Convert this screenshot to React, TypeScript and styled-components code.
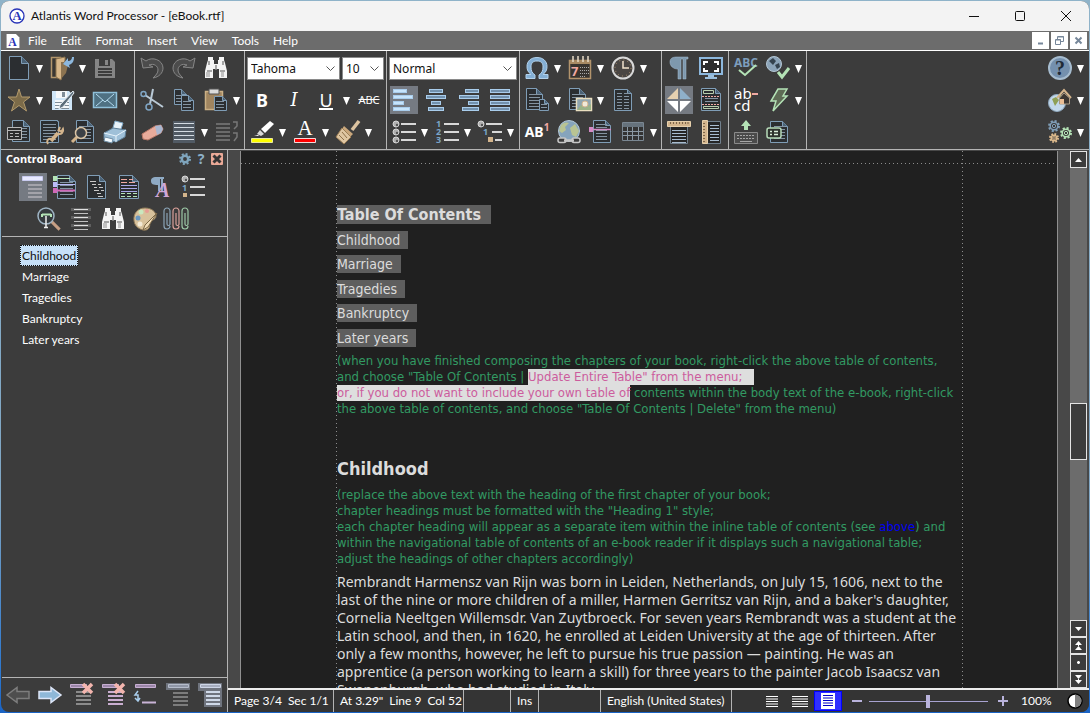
import React, { ReactNode } from 'react';
import styled, { createGlobalStyle, css } from 'styled-components';

const uiFont = 'Lato, "Noto Sans", sans-serif';
const noto = '"Noto Sans", "Open Sans", sans-serif';
const dejavu = '"DejaVu Sans Condensed", "DejaVu Sans", sans-serif';

const c = {
  panel: '#3c3c3c',
  bar: '#6c6c6c',
  edge: '#b4b4b4',
  sheet: '#202020',
  gutter: '#484848',
  steel: '#7f9db6',
  sky: '#a9cdec',
  sand: '#d3b48c',
  dark: '#2b2e31',
  mint: '#b4e3b6',
  lilac: '#b9b3dc',
  rose: '#f0a9a2',
};

const GlobalStyle = createGlobalStyle`
  * { box-sizing: border-box; }
  html, body { margin: 0; padding: 0; overflow: hidden; }
  body { font: 12px/16px ${uiFont}; color: #fff; }
  button { margin: 0; padding: 0; border: 0; background: none; color: inherit; font: inherit; cursor: default; }
  ul, h1, h2, p { margin: 0; padding: 0; }
  ul { list-style: none; }
`;

/* ---------- window frame ---------- */

const Desktop = styled.div`
  height: 100vh;
  padding: 1px;
  background: linear-gradient(#8fb3c9 0%, #7fa6c4 70%, #2a76cf 95%, #1a63c4 100%);
`;

const WindowFrame = styled.main`
  display: flex;
  flex-direction: column;
  height: 100%;
  border-radius: 8px;
  overflow: hidden;
  background: ${c.panel};
`;

const TitleBar = styled.header`
  display: flex;
  align-items: center;
  flex: none;
  height: 30px;
  padding-left: 8px;
  gap: 6px;
  background: #f3f3f3;
  color: #101010;
`;

const TitleText = styled.span`
  flex: 1;
`;

const CaptionButtons = styled.div`
  display: flex;
`;

const CaptionButton = styled.button`
  display: grid;
  place-items: center;
  width: 46px;
  height: 30px;
`;

const MenuBar = styled.nav`
  display: flex;
  align-items: center;
  flex: none;
  height: 20px;
  padding: 0 2px 0 5px;
  border-bottom: 1px solid #fff;
  background: ${c.bar};
`;

const Menus = styled.div`
  display: flex;
  flex: 1;
  gap: 14px;
  padding-left: 8px;
`;

const MenuButton = styled.button`
  height: 18px;
`;

const ChildButtons = styled.div`
  display: flex;
  gap: 2px;
`;

const ChildButton = styled.button`
  display: grid;
  place-items: center;
  width: 17px;
  height: 17px;
  background: #fff;
`;

/* ---------- toolbar ---------- */

const Toolbar = styled.div`
  display: flex;
  flex: none;
  height: 99px;
  padding: 0 0 0 1px;
  border-bottom: 1px solid ${c.edge};
  background: ${c.panel};
`;

const ToolGroup = styled.div<{ $wide?: boolean }>`
  padding: 1px ${(p) => (p.$wide ? 2 : 1)}px 0 1px;
  border-right: 1px solid ${c.edge};
`;

const HelpGroup = styled.div`
  margin-left: auto;
  padding: 1px 2px 0 0;
`;

const ToolRow = styled.div`
  display: flex;
  height: 32px;
`;

const ComboRow = styled.div`
  display: flex;
  gap: 2px;
  height: 32px;
  padding: 4px 1px;
`;

const Slot = styled.button<{ $on?: boolean }>`
  display: grid;
  place-items: center;
  width: 28px;
  height: 28px;
  margin: 2px;
  ${(p) => p.$on && css`background: #757a82;`}
`;

const CaretSlot = styled.button`
  display: grid;
  place-items: center;
  width: 11px;
  height: 32px;
  padding: 2px 2px 0 0;
`;

const Art = styled.svg`
  display: block;
  overflow: visible;
`;

const SelectWrap = styled.label<{ $w: number }>`
  display: grid;
  align-items: center;
  width: ${(p) => p.$w}px;
  height: 24px;
  > * { grid-area: 1 / 1; }
  svg { justify-self: end; margin-right: 5px; pointer-events: none; }
`;

const Select = styled.select`
  appearance: none;
  width: 100%;
  height: 23px;
  padding: 0 3px;
  border: 1px solid #8a8a8a;
  border-radius: 0;
  background: #fff;
  color: #111;
  font: 12px ${noto};
`;

const Letter = styled.span<{ $kind: 'b' | 'i' | 'u' | 's' | 'n' }>`
  line-height: 24px;
  ${(p) => p.$kind === 'b' && css`font: bold 18px/24px ${noto};`}
  ${(p) => p.$kind === 'i' && css`font: italic 18px/24px "DejaVu Serif", "Liberation Serif", serif;`}
  ${(p) => p.$kind === 'u' && css`font: 18px/20px ${noto}; border-bottom: 2px solid #fff; height: 20px;`}
  ${(p) => p.$kind === 's' && css`font: 11px/24px ${noto}; text-decoration: line-through;`}
  ${(p) => p.$kind === 'n' && css`font: bold 14px/24px ${noto}; sup { font-size: 10px; line-height: 8px; color: ${c.rose}; }`}
`;

/* ---------- control board ---------- */

const Body = styled.div`
  display: flex;
  flex: 1;
  min-height: 0;
`;

const Board = styled.aside`
  display: flex;
  flex-direction: column;
  flex: none;
  width: 227px;
  padding-left: 1px;
  border-right: 1px solid ${c.edge};
`;

const BoardHeader = styled.div`
  display: flex;
  align-items: center;
  gap: 4px;
  height: 19px;
  padding: 0 4px 2px;
`;

const BoardTitle = styled.h2`
  flex: 1;
  font: bold 11px/16px ${noto};
`;

const BoardTools = styled.div`
  padding: 2px 0 1px;
  border-bottom: 1px solid ${c.edge};
`;

const BoardRow = styled.div<{ $indent: number }>`
  display: flex;
  height: 32px;
  padding-left: ${(p) => p.$indent}px;
`;

const Outline = styled.ul`
  flex: 1;
  padding: 8px 0 0 18px;
`;

const OutlineItem = styled.button<{ $on?: boolean }>`
  display: block;
  height: 21px;
  padding: 0 2px;
  ${(p) => p.$on && css`
    background: #c6e0f8;
    color: #111;
    outline: 1px dotted #111;
    outline-offset: -1px;
  `}
`;

const BoardFooter = styled.div`
  display: flex;
  height: 35px;
  padding-top: 1px;
  border-top: 1px solid ${c.edge};
`;

/* ---------- document ---------- */

const Workspace = styled.section`
  display: flex;
  flex-direction: column;
  flex: 1;
  min-width: 0;
`;

const Viewport = styled.div`
  display: flex;
  flex: 1;
  min-height: 0;
  padding: 1px 2px 0 12px;
  border-bottom: 2px solid #ececec;
  background: ${c.gutter};
`;

const dotsDown = 'repeating-linear-gradient(to bottom, #8c8c8c 0 1px, transparent 1px 4px)';
const dotsAcross = 'repeating-linear-gradient(to right, #8c8c8c 0 1px, transparent 1px 4px)';

const Sheet = styled.article`
  flex: 1;
  min-width: 0;
  margin-right: 12px;
  padding: 54px 94px 0 96px;
  overflow: hidden;
  border: solid #909090;
  border-width: 0 1px;
  background:
    ${dotsDown} left 95px top 0 / 1px 100% no-repeat,
    ${dotsDown} right 94px top 0 / 1px 100% no-repeat,
    ${dotsAcross} left 0 top 12px / 100% 1px no-repeat,
    ${c.sheet};
  color: #dcdcdc;
  white-space: nowrap;
`;

const ContentsTitle = styled.h1`
  width: max-content;
  padding-right: 10px;
  background: #5e5e5e;
  font: bold 16px/19px ${dejavu};
`;

const Contents = styled.ul`
  padding-bottom: 6px;
`;

const ContentsItem = styled.li`
  width: max-content;
  margin-top: 6px;
  padding-right: 8px;
  background: #5e5e5e;
  font: 14px/18px ${dejavu};
  &:nth-child(odd) { margin-top: 7px; }
`;

const Note = styled.p`
  color: #329a63;
  font: 13px/16px ${dejavu};
`;

const Marked = styled.span`
  display: inline-block;
  padding-right: 12px;
  background: #dedede;
  color: #cc5c9d;
  & + br + & { padding-right: 0; }
`;

const CrossLink = styled.a`
  color: #0000f0;
  text-decoration: none;
`;

const Chapter = styled.h2`
  padding: 40px 0 6px;
  font: bold 18px/24px ${dejavu};
`;

const Paragraph = styled.p`
  padding-top: 6px;
  font: 14px/18px ${noto};
`;

const ScrollBar = styled.div`
  display: flex;
  flex-direction: column;
  width: 17px;
  background: ${c.bar};
`;

const ScrollButton = styled.button`
  display: grid;
  place-items: center;
  flex: none;
  width: 17px;
  height: 17px;
  border: 1px solid #e4e4e4;
  background: ${c.panel};
`;

const Track = styled.div<{ $grow: number }>`
  flex: ${(p) => p.$grow} 0 0;
`;

const Thumb = styled.div`
  flex: none;
  height: 57px;
  border: 1px solid #e4e4e4;
  background: ${c.panel};
`;

/* ---------- status bar ---------- */

const StatusBar = styled.footer`
  display: flex;
  align-items: center;
  flex: none;
  height: 22px;
  background: #343434;
`;

const StatusCell = styled.div<{ $w: number }>`
  display: flex;
  align-items: center;
  gap: 6px;
  flex: none;
  width: ${(p) => p.$w}px;
  height: 22px;
  padding-left: 6px;
  border-right: 1px solid ${c.edge};
  white-space: nowrap;
`;

const ViewTools = styled.div`
  display: flex;
  align-items: center;
  flex: none;
  margin-left: auto;
`;

const ViewButton = styled.button<{ $on?: boolean }>`
  display: grid;
  place-items: center;
  width: 28px;
  height: 20px;
  ${(p) => p.$on && css`background: #2f2fff; border: 1px solid #0000ff;`}
`;

const ZoomStep = styled.button`
  display: grid;
  place-items: center;
  width: 12px;
  height: 20px;
  margin: 0 6px 0 9px;
`;

const ZoomSlider = styled.input`
  appearance: none;
  width: 119px;
  height: 20px;
  margin: 0;
  background: linear-gradient(#a8a2d0, #a8a2d0) center / 100% 1px no-repeat;
  &::-webkit-slider-thumb {
    appearance: none;
    width: 4px;
    height: 13px;
    background: ${c.lilac};
  }
`;

const ZoomValue = styled.output`
  width: 52px;
  padding-left: 6px;
`;

const ThemeButton = styled.button`
  width: 16px;
  height: 16px;
  margin-right: 6px;
`;

/* ---------- icons ---------- */

const page = (x: number, y: number, w: number, h: number, f = 6) => (
  <>
    <path
      d={`M${x + 0.5} ${y + 0.5}h${w - f - 1}l${f} ${f}v${h - f - 1}h${1 - w}z`}
      fill={c.dark}
      stroke={c.steel}
    />
    <path d={`M${x + w - f - 0.5} ${y + 0.5}v${f}h${f}`} fill="#4b6276" stroke={c.steel} />
  </>
);

const lines = (x: number, y: number, w: number, n: number, step = 3, color = '#8494a2', t = 1) => (
  <path
    d={Array.from({ length: n }, (_, i) => `M${x} ${y + i * step + t / 2}h${w}`).join('')}
    stroke={color}
    strokeWidth={t}
    fill="none"
  />
);

const binoculars = (
  <g fill="#f4f4f4">
    <path d="M4 1h5v3h1v4h4V4h1V1h5v3l1 3 2 8v7h-8v-9h-6v9H1v-7l2-8 1-3z" />
    <path d="M5 5v4M19 5v4M3 15h5M16 15h5M12 9v5" stroke="#8b8b8b" strokeWidth="1.5" />
    <path d="M2 16h4v5H2zM17 16h3v5h-3z" fill="#c2c2c2" />
  </g>
);

const gear = (x: number, y: number, r: number, color: string, id: string) => (
  <g key={id} fill="none" stroke={color}>
    <circle cx={x} cy={y} r={r} strokeWidth="2" strokeDasharray={`${r * 0.42} ${r * 0.365}`} />
    <circle cx={x} cy={y} r={r - 1.2} strokeWidth="1.5" />
    <circle cx={x} cy={y} r={r / 3} strokeWidth="1" />
  </g>
);

const floppy = (body: string, ink: string, slot: string) => (
  <>
    <path d="M2 3h17l3 3v16H2z" fill={body} />
    <path d="M6 3h11v7H6z" fill={ink} />
    <path d="M12 4h3v5h-3z" fill={slot} />
    <path d="M5 12h14v9H5z" fill={ink} />
    {lines(5, 14, 14, 3, 3, slot)}
  </>
);

const ball = (x: number, y: number) => (
  <>
    <circle cx={x} cy={y} r="3" fill="#b0b0b0" stroke="#d8d8d8" strokeWidth="1" />
    <circle cx={x + 1} cy={y + 1} r="1.2" fill="#555" />
  </>
);

const bar = (x: number, y: number, w: number, fill: string) => (
  <rect key={`${x}-${y}`} x={x + 0.5} y={y + 0.5} width={w - 1} height="3" fill={fill} stroke={c.sky} />
);

const bars = (rows: [number, number][], fill: string) => <>{rows.map(([x, w], i) => bar(x, 1 + i * 6, w, fill))}</>;

const arrow = (fill: string, stroke: string) => (
  <path d="M1 8.500h12v-4L23 12l-10 7.500v-4H1z" fill={fill} stroke={stroke} strokeWidth="1.5" />
);

const magnifier = (x: number, y: number, r: number, handle: string) => (
  <>
    <path d={`M${x + r * 0.7} ${y + r * 0.7}l${r} ${r}`} stroke={handle} strokeWidth="3" />
    <circle cx={x} cy={y} r={r} fill="#353a3e" stroke="#9fb4c4" strokeWidth="1.5" />
  </>
);

const cross = (
  <path d="M13 1l9 9M22 1l-9 9" stroke="#f3b5ae" strokeWidth="3.500" />
);

const icons: Record<string, ReactNode> = {
  app: (
    <>
      <circle cx="12" cy="12" r="10.500" fill="#fff" stroke="#2a35b8" strokeWidth="2" />
      <text x="12" y="18" textAnchor="middle" fontFamily="Liberation Serif" fontWeight="bold" fontSize="19" fill="#2a35b8">A</text>
    </>
  ),
  appDoc: (
    <>
      <path d="M1 0h16l6 6v18H1z" fill="#fff" />
      <text x="11" y="21" textAnchor="middle" fontFamily="Liberation Serif" fontWeight="bold" fontSize="20" fill="#2a35b8">A</text>
    </>
  ),
  new: page(2, 0, 20, 24, 7),
  open: (
    <>
      <path d="M1.500 1.500h9v20h-9z" fill="#3a3733" stroke="#b3966c" strokeWidth="1.500" />
      <path d="M6 3l9-2v3l-4 20-5-3z" fill="#d9b88a" stroke="#8d744f" />
      <path d="M11 6h6l1 3-2 8-5 6z" fill="#8c7350" />
      <path d="M24 1c0 5-2 7-5 8l1 3-7-4 5-6v3c3 0 4-2 4-4z" fill="#8db8de" />
    </>
  ),
  save: floppy('#858585', '#3c3c3c', '#858585'),
  star: <path d="M12 1l2.500 8H23l-6.500 5 3 9L12 17.500 4.500 23l3-9L1 9h8.500z" fill="#7c6b49" stroke="#b39a6c" />,
  saveAs: (
    <>
      {floppy('#cfe6f8', '#f5f8fa', '#7f8d98')}
      <path d="M23 3L10 17l-1 4 4-2L24 5z" fill="#5c6d7a" stroke="#e6eef4" />
    </>
  ),
  mail: (
    <>
      <path d="M.5 4.500h23v15H.5z" fill="#4f7183" stroke="#8fc0da" strokeWidth="1.500" />
      <path d="M3 6l9 8 9-8M3 18l7-6M21 18l-7-6" fill="none" stroke="#b4daee" />
    </>
  ),
  template: (
    <>
      {page(5, 0, 18, 22)}
      {lines(12, 8, 8, 4)}
      <path d="M.5 7.500h14v12H.5z" fill="#2d2d2d" stroke="#b8b8b8" />
      <path d="M.5 10.500h14M3 13.500h3M8 13.500h4M3 16.500h3M8 16.500h4" stroke="#b8b8b8" />
    </>
  ),
  docSetup: (
    <>
      {page(1, 0, 19, 23, 1)}
      {lines(4, 4, 13, 6)}
      <path d="M12 21l7-8" stroke={c.sand} strokeWidth="3.500" />
      <path d="M21 7l-1.500 3.500 3 1L24 9c1 3-2 6-5 4.500M12 19c-3-1-5 2-3 5" fill="none" stroke={c.sand} strokeWidth="2" />
    </>
  ),
  preview: (
    <>
      {page(5, 0, 18, 23)}
      {lines(8, 6, 12, 5)}
      <path d="M6 17l-5 5" stroke={c.sand} strokeWidth="3" />
      <circle cx="10" cy="13" r="5.500" fill="#3c4146" stroke="#d9c3a4" strokeWidth="1.500" />
    </>
  ),
  print: (
    <>
      <path d="M9 11l3-10 8 2-3 9z" fill="#e9f3fa" stroke="#7fa8c6" />
      <path d="M1 13l9-5 13 2-1 7-9 5-12-3z" fill="#9fc0d8" stroke="#5c7d96" />
      <path d="M1 13l12 3 10-6M13 16v6" stroke="#e8f4fc" fill="none" />
      <path d="M2 17l8 2-1 4-8-2z" fill="#f4fafe" stroke="#6e8ea6" />
    </>
  ),
  undo: <path d="M1 2l2 10 10-1-4-2c5-2 9 1 9 5 0 3-2 5-5 8 6-1 10-5 10-10C23 4 12 0 6 5z" fill="#4c4c4c" stroke="#868686" />,
  redo: <path d="M23 2l-2 10-10-1 4-2c-5-2-9 1-9 5 0 3 2 5 5 8-6-1-10-5-10-10C1 4 12 0 18 5z" fill="#4c4c4c" stroke="#868686" />,
  find: binoculars,
  cut: (
    <>
      <path d="M13 1l-3 15M5 7l18 12" stroke="#b9c9d6" strokeWidth="2" />
      <circle cx="3.500" cy="6" r="2.500" fill="none" stroke="#7fa5c4" strokeWidth="1.500" />
      <circle cx="9" cy="19" r="3" fill="none" stroke="#7fa5c4" strokeWidth="1.500" />
    </>
  ),
  copy: (
    <>
      {page(2, 1, 13, 16, 5)}
      {lines(4, 7, 7, 3)}
      {page(9, 7, 13, 16, 5)}
      {lines(11, 13, 8, 3)}
    </>
  ),
  paste: (
    <>
      <path d="M1.500 3.500h17v18h-17z" fill="#a08560" stroke="#cbb085" strokeWidth="1.500" />
      <path d="M5 1h10v5H5z" fill="#dcdcdc" stroke="#555" />
      {page(10, 8, 13, 15, 4)}
      {lines(12, 13, 8, 3)}
    </>
  ),
  eraser: (
    <>
      <path d="M2 14l13-8 6-1 2 4-2 4-13 7-5-1z" fill="#e8ab9b" stroke="#b97868" />
      <path d="M15 6l6-1 2 4-2 4-4 2z" fill="#a9b7d0" />
    </>
  ),
  linesList: (
    <>
      <path d="M1 1h22v22H1z" fill="#515a64" />
      {lines(2, 3, 20, 5, 4, '#d4dbe2', 1)}
    </>
  ),
  sorted: (
    <>
      {lines(1, 3, 14, 5, 4, '#6b6b6b', 2)}
      <path d="M18 2h4v4l-3 3M18 13h4v4l-3 4" fill="none" stroke="#777" strokeWidth="1.500" />
    </>
  ),
  highlight: (
    <>
      <path d="M20 1l4 3-9 9-4-4z" fill="#fff" />
      <path d="M10 10l4 4-3 2-4-2z" fill="#d8d8d8" />
      <path d="M4 16l4-1 1 1z" fill="#fff" />
      <path d="M1.500 18.500h21v4h-21z" fill="#ff0" stroke="#e8e8a0" />
    </>
  ),
  fontColor: (
    <>
      <text x="12" y="15" textAnchor="middle" fontFamily="Liberation Serif" fontSize="21" fill="#fff">A</text>
      <path d="M1.500 18.500h21v4h-21z" fill="#f00" stroke="#f4dada" />
    </>
  ),
  brush: (
    <>
      <path d="M23 1l-7 9" stroke="#dcc3a0" strokeWidth="3.500" />
      <path d="M8 6l9 8-3 3-8-8z" fill="#c9a77c" />
      <path d="M6 8l9 9-7 7-8-7z" fill="#dfc6a2" stroke="#9d7f56" />
      <path d="M3 15l5 5M6 12l5 6" stroke="#8e7149" />
    </>
  ),
  left: bars([[1, 14], [1, 20], [1, 11], [1, 17]], '#c7e4fb'),
  center: bars([[5, 14], [2, 20], [7, 10], [4, 16]], '#7291ad'),
  right: bars([[9, 14], [3, 20], [12, 11], [6, 17]], '#7291ad'),
  justify: bars([[2, 20], [2, 20], [2, 20], [2, 20]], '#7291ad'),
  bullets: (
    <>
      {ball(4, 4)}
      {ball(4, 12)}
      {ball(4, 20)}
      {lines(9, 3, 15, 3, 8, '#d8d8d8', 2)}
    </>
  ),
  numbers: (
    <>
      <g fontFamily="Noto Sans" fontWeight="bold" fontSize="9" fill="#7aa4c8">
        <text x="1" y="7">1</text>
        <text x="1" y="15">2</text>
        <text x="1" y="23">3</text>
      </g>
      {lines(9, 3, 15, 3, 8, '#d8d8d8', 2)}
    </>
  ),
  levels: (
    <>
      {ball(3, 4)}
      <text x="5" y="15" fontFamily="Noto Sans" fontWeight="bold" fontSize="9" fill="#7aa4c8">1</text>
      <path d="M10 17h5v5h-5z" fill={c.sand} />
      <path d="M8 4h16M14 12h10M17 20h7" stroke="#d8d8d8" strokeWidth="2" />
    </>
  ),
  omega: (
    <path
      d="M1 22.500v-4h5C3 16 2 14 2 10.500 2 5 6 1.500 12 1.500s10 3.500 10 9c0 3.500-1 5.500-4 8h5v4h-9V19c3-2 4-4.500 4-8 0-4-2-6-6-6s-6 2-6 6c0 3.500 1 6 4 8v3.500z"
      fill="#84afd4"
      stroke="#b3d2ec"
    />
  ),
  calendar: (
    <>
      <path d="M1.500 4.500h21v18h-21z" fill="#38342f" stroke="#b3946c" strokeWidth="1.500" />
      <path d="M2 4h20v4H2z" fill="#a88a63" />
      <path d="M5 0v6M10 0v6M15 0v6M20 0v6" stroke="#e8dcc8" strokeWidth="1.500" />
      <text x="3" y="20" fontFamily="Noto Sans" fontWeight="bold" fontSize="13" fill={c.rose}>7</text>
      <path d="M12 11.500h9M12 14.500h9M12 17.500h9M12 20.500h6" stroke="#aaa" strokeDasharray="1 1" />
    </>
  ),
  clock: (
    <>
      <circle cx="12" cy="12" r="10.500" fill="#4a4643" stroke="#d8d8d8" strokeWidth="2" />
      <circle cx="12" cy="12" r="8" fill="none" stroke="#b49572" strokeDasharray="1 3.200" />
      <path d="M12 5v7h6" fill="none" stroke="#f2e2cc" strokeWidth="1.500" />
    </>
  ),
  docs: (
    <>
      {page(1, 0, 17, 22, 6)}
      {lines(4, 6, 11, 5)}
      {page(14, 11, 10, 12, 4)}
      {lines(16, 16, 6, 2)}
    </>
  ),
  picture: (
    <>
      {page(1, 0, 17, 22, 6)}
      {lines(4, 6, 11, 5)}
      <path d="M8.500 10.500h15v12h-15z" fill="#8fa5b0" stroke="#eadfc0" strokeWidth="1.500" />
      <path d="M9 22l4-5 4 3 6-4v6z" fill="#9ab387" />
      <circle cx="17" cy="16" r="3" fill="#f1ead8" stroke={c.sand} />
    </>
  ),
  columns: (
    <>
      {page(3, 1, 18, 22, 4)}
      {lines(6, 5, 5, 6)}
      {lines(13, 5, 5, 6)}
    </>
  ),
  link: (
    <>
      <circle cx="12" cy="11" r="10.500" fill="#86a4bc" stroke="#b4c9d8" />
      <path d="M4 5c3-3 6-3 8-2l-4 4 1 3-4 3-3-2zM13 8l5-4 4 7-3 6-4-2z" fill="#b9c493" />
      <g fill="#3c3c3c" stroke="#c7c7c7" strokeWidth="1.500">
        <rect x="1" y="18" width="8" height="4.500" rx="2" />
        <rect x="15" y="18" width="8" height="4.500" rx="2" />
        <path d="M7 20.500h10" strokeWidth="2.500" />
      </g>
    </>
  ),
  footnote: (
    <>
      {page(4, 0, 18, 23, 5)}
      {lines(7, 4, 11, 6)}
      <path d="M0 9.500h22" stroke="#d48ac6" strokeWidth="1.500" />
      <path d="M0 7h4v5H0z" fill="#d48ac6" />
    </>
  ),
  table: (
    <>
      <path d="M1.500 2.500h21v18h-21z" fill="#333" stroke="#7a8792" />
      <path d="M2 3h20v4H2z" fill="#66727c" />
      <path d="M6.500 7v13M11.500 7v13M17.500 7v13M2 11.500h20M2 15.500h20" stroke="#8b98a3" />
    </>
  ),
  pilcrow: <path d="M3 6c0-4 3-5 7-5h11v2h-2v20h-3V3h-2v20h-3V13C6 13 3 10 3 6z" fill="#7e98ad" stroke="#a9c1d6" strokeWidth=".5" />,
  screen: (
    <>
      <path d="M1 2h22v16H1z" fill="#2f2f2f" stroke="#8db8de" strokeWidth="2" />
      <path d="M5 9V6h4M15 6h4v3M19 12v3h-4M9 15H5v-3" fill="none" stroke="#fff" strokeWidth="2" />
      <path d="M9 19h6v2h3v2H6v-2h3z" fill="#9cc0de" />
    </>
  ),
  compass: (
    <>
      <path d="M11 0v11H0z" fill="#e6d0b0" />
      <path d="M13 0v11h11z" fill="#8fb0ca" />
      <path d="M0 13h11v11zM24 13H13v11z" fill="#fff" />
    </>
  ),
  headers: (
    <>
      {page(2, 0, 20, 23, 5)}
      <path d="M4.500 2.500h10v3h-10zM4.500 18.500h15v2h-15z" fill="none" stroke="#b9cfae" />
      <path d="M3 8.500h18M3 16.500h18" stroke={c.rose} strokeDasharray="2 1" />
      {lines(6, 10, 13, 2, 3)}
    </>
  ),
  rulerTop: (
    <>
      <path d="M3.500 4.500h17v19h-17z" fill="#262626" stroke="#71808d" />
      {lines(5, 10, 14, 5, 3, '#a9bdd0')}
      <path d="M.5 1.500h23v5H.5z" fill={c.sand} stroke="#e7d0ac" />
      <path d="M3.500 2v2M6.500 2v2M9.500 2v2M12.500 2v2M15.500 2v2M18.500 2v2M21 2v2" stroke="#7d664a" />
    </>
  ),
  rulerSide: (
    <>
      <path d="M5.500 1.500h16v22h-16z" fill="#262626" stroke="#71808d" />
      {lines(11, 5, 9, 6, 3, '#a9bdd0')}
      <path d="M3.500.5h5v23h-5z" fill={c.sand} stroke="#e7d0ac" />
      <path d="M4 3.500h2M4 6.500h2M4 9.500h2M4 12.500h2M4 15.500h2M4 18.500h2M4 21.500h2" stroke="#7d664a" />
    </>
  ),
  spell: (
    <>
      <text x="12" y="11" textAnchor="middle" fontFamily="Noto Sans" fontWeight="bold" fontSize="12" fill="#7d9dbd">ABC</text>
      <path d="M5 14l6 5L22 9" fill="none" stroke={c.mint} strokeWidth="2" />
    </>
  ),
  lookup: (
    <>
      <circle cx="8" cy="8" r="7.500" fill="#8ba3b8" stroke="#b3c6d4" />
      <path d="M3 5l4-3 3 3-3 4zM9 9l4-2 1 4-3 2z" fill="#34424e" />
      <path d="M12 16l4 5 7-9" fill="none" stroke={c.mint} strokeWidth="3" />
    </>
  ),
  hyphen: (
    <g fontFamily="Noto Sans" fontSize="15" fill="#fff">
      <text x="0" y="11">ab</text>
      <text x="0" y="23">cd</text>
      <path d="M18 6h6" stroke={c.rose} strokeWidth="2" />
    </g>
  ),
  bolt: <path d="M12 1h9l-4 7h4L7 23l3-10H5z" fill="#5e6b55" stroke={c.mint} strokeWidth="1.500" />,
  keyboard: (
    <>
      <path d="M12 0l5 6h-3v4h-4V6H7z" fill={c.mint} />
      <path d="M.5 12.500h23v11H.5z" fill="#4b4b4b" stroke="#8a8a8a" />
      <path d="M3 15.500h18M3 18.500h18" stroke="#a6a6a6" strokeDasharray="2 1" />
      <path d="M6 21.500h12" stroke="#a6a6a6" />
    </>
  ),
  comment: (
    <>
      {page(4, 1, 18, 22, 5)}
      {lines(8, 6, 11, 5)}
      <rect x="1" y="8" width="14" height="10" rx="2" fill="#2e332e" stroke="#b7dbb9" strokeWidth="1.500" />
      <path d="M4 11.500h2M8 11.500h4M4 14.500h2M8 14.500h4" stroke="#dcefdc" strokeWidth="1.500" />
    </>
  ),
  help: (
    <>
      <circle cx="12" cy="12" r="11" fill="#7490ae" stroke="#a6bccf" strokeWidth="2" />
      <text x="12" y="19" textAnchor="middle" fontFamily="Liberation Serif" fontWeight="bold" fontSize="20" fill="#1f2a36">?</text>
    </>
  ),
  home: (
    <>
      <circle cx="9" cy="15" r="8.500" fill="#c3d8ea" stroke="#8fa9bf" />
      <path d="M4 11l4-2 3 3-4 6zM10 8l3-1v4z" fill="#8fa055" />
      <path d="M9 10l7-8 7 8" fill="none" stroke={c.sand} strokeWidth="2" />
      <path d="M11.500 10l4.500-5 5.500 5v6h-10z" fill="#3b3632" stroke="#a99a84" />
      <path d="M12 11h4v5h-4z" fill="#e9bd94" />
    </>
  ),
  gears: <>{[gear(6, 6, 5, '#7f9db6', 'a'), gear(18, 13, 5, '#b4e3b6', 'b'), gear(6, 18, 4, '#dcb98c', 'c')]}</>,
  headings: (
    <>
      <path d="M1.500 1.500h20v4h-20z" fill="#e8e9ff" stroke="#c9cbf0" />
      {lines(7, 9, 14, 4, 4, '#a3a3aa', 2)}
    </>
  ),
  bookmarks: (
    <>
      {page(4, 0, 19, 24, 6)}
      {lines(7, 7, 13, 5)}
      <path d="M0 1h4v5H0z" fill={c.mint} />
      <path d="M0 7h4v5H0z" fill="#bcbcf8" />
      <path d="M0 13h4v5H0z" fill="#d069b8" />
      <path d="M4 3.500h13" stroke={c.mint} />
      <path d="M4 9.500h18" stroke="#bcbcf8" />
      <path d="M4 15.500h18" stroke="#d069b8" strokeWidth="2" />
    </>
  ),
  fields: (
    <>
      {page(2, 0, 19, 24, 6)}
      <path d="M5 6.500h6M7 9.500h4M9 12.500h3M9 15.500h5M13 9.500h3M14 12.500h4M12 18.500h4M16 15.500h3M13 21.500h5" stroke="#c8c8c8" />
    </>
  ),
  sections: (
    <>
      {page(2, 0, 20, 24, 6)}
      <path d="M4 4.500h12M4 7.500h14" stroke={c.rose} strokeDasharray="6 2" />
      {lines(4, 10, 16, 3, 3, '#a9a9e8')}
      <path d="M4 18.500h16M4 21.500h16" stroke={c.mint} strokeDasharray="4 2" />
    </>
  ),
  styles: (
    <>
      <path d="M2 6c0-3 2-4 5-4h8v2h-1v12h-2V4h-1v12H9v-6C4 10 2 9 2 6z" fill="#8faac4" />
      <text x="7" y="22" fontFamily="Liberation Serif" fontStyle="italic" fontWeight="bold" fontSize="21" fill="#cfa6d6">A</text>
    </>
  ),
  lists: (
    <>
      {ball(4, 4)}
      <text x="1" y="16" fontFamily="Noto Sans" fontWeight="bold" fontSize="9" fill="#7aa4c8">1</text>
      <path d="M2 18h4v4H2z" fill={c.sand} />
      {lines(9, 3, 15, 3, 8, '#d8d8d8', 2)}
    </>
  ),
  zoomText: (
    <>
      {magnifier(9, 9, 8, '#c79f84')}
      <path d="M5 7.500h9M5 7v3M14 7v3" stroke={c.mint} strokeWidth="2" />
      <path d="M9 9v11M7 20.500h4" stroke="#f0f0f0" strokeWidth="1.500" />
    </>
  ),
  format: (
    <>
      <path d="M2 1h20v3H2zM2 9h20v3H2zM2 17h20v3H2z" fill="#5f5f5f" />
      {lines(5, 2, 14, 3, 8, '#e0e0e0', 1)}
      {lines(5, 6, 14, 3, 8, '#c0c0c0', 1)}
    </>
  ),
  palette: (
    <>
      <path d="M12 1c7 0 11 4 11 8s-5 4-6 6 1 4-2 7-13 0-14-8S5 1 12 1z" fill="#d8c29c" stroke="#8f7a58" />
      <circle cx="8" cy="5" r="2.500" fill="#c9e8bf" />
      <circle cx="14" cy="4" r="2" fill="#e89c94" />
      <circle cx="5" cy="11" r="2.500" fill="#6b98bf" />
      <circle cx="7" cy="17" r="2.500" fill="#f3ead6" />
      <path d="M24 6L12 18l-2 5 5-3z" fill="#f0dcb8" stroke="#7d6947" />
    </>
  ),
  clips: (
    <g fill="none" strokeWidth="1.200">
      {([['#8aa3b6', 0], ['#d9a09a', 9], ['#9cc7a6', 18]] as [string, number][]).map(([s, x]) => (
        <path key={x} stroke={s} d={`M${x + 2} 6v11a1.500 1.500 0 0 0 3 0V4a3 3 0 0 0-6 0v15a3 3 0 0 0 6 0`} />
      ))}
    </g>
  ),
  back: <g transform="matrix(-1 0 0 1 24 0)">{arrow('#4e4e4e', '#7d7d7d')}</g>,
  forward: arrow('#8fb8d8', '#dde6f8'),
  removeOne: (
    <>
      <path d="M.5 1.500h16v3H.5z" fill="#9b86a8" stroke="#c7aed2" />
      {lines(6, 8, 15, 4, 4, '#8b8b8b', 2)}
      {cross}
    </>
  ),
  removeAll: (
    <>
      <path d="M.5 1.500h16v3H.5z" fill="#9b86a8" stroke="#c7aed2" />
      {lines(6, 8, 15, 4, 4, '#c9aed0', 2)}
      {cross}
    </>
  ),
  demote: (
    <>
      <path d="M1.500 1.500h20v3h-20z" fill="#9b86a8" stroke="#c7aed2" />
      <path d="M4 8l-3 4h3v6M1 15l3 3 2-3" stroke={c.sky} strokeWidth="1.500" fill="none" />
      <path d="M8 19.500h14" stroke="#c9b3d6" strokeWidth="2" />
    </>
  ),
  level: (
    <>
      <path d="M0 0h24v7H0z" fill="#6f747e" />
      <path d="M2.500 1.500h20v3h-20z" fill="#8f96a6" stroke="#b5bccb" />
      {lines(7, 9, 15, 4, 4, '#7c7c7c', 2)}
    </>
  ),
  levelOpen: (
    <>
      <path d="M0 0h24v24H6V8H0z" fill="#6f747e" />
      <path d="M2.500 1.500h20v3h-20z" fill="#a6adbe" stroke="#cdd5e6" />
      {lines(8, 8, 14, 4, 4, '#cfd9e8', 2)}
    </>
  ),
};

const Icon = ({ name, size = 24 }: { name: string; size?: number }) => (
  <Art width={size} height={size} viewBox="0 0 24 24" aria-hidden="true">{icons[name]}</Art>
);

const Caret = ({ label }: { label: string }) => (
  <CaretSlot aria-label={`${label} options`}>
    <Art width="7" height="8" viewBox="0 0 7 8"><path d="M0 0h7L3.500 8z" fill="#fff" /></Art>
  </CaretSlot>
);

/* "+" after a tool name adds its drop-down caret; "*" marks it pressed. */
const Tools = ({ items }: { items: string }) => (
  <ToolRow>
    {items.split(' ').map((item) => {
      const name = item.replace(/[*+]/g, '');
      return (
        <React.Fragment key={item}>
          <Slot $on={item.includes('*')} aria-label={name}><Icon name={name} /></Slot>
          {item.includes('+') && <Caret label={name} />}
        </React.Fragment>
      );
    })}
  </ToolRow>
);

const Combo = ({ label, value, width }: { label: string; value: string; width: number }) => (
  <SelectWrap $w={width}>
    <Select aria-label={label} defaultValue={value}><option>{value}</option></Select>
    <Art width="9" height="5" viewBox="0 0 9 5"><path d="M.5.5l4 4 4-4" fill="none" stroke="#555" /></Art>
  </SelectWrap>
);

const scrollShapes: Record<string, string> = {
  up: 'M1 7h7L4.500 3z',
  down: 'M1 3h7L4.500 7z',
  top: 'M1 4h7L4.500 0zM1 9h7L4.500 5zM4 4h1v1H4z',
  item: 'M3 4l1-1h1l1 1v1L5 6H4L3 5z',
  bottom: 'M1 0h7L4.500 4zM1 5h7L4.500 9zM4 4h1v1H4z',
};

const Scroll = ({ kind }: { kind: string }) => (
  <ScrollButton aria-label={kind}>
    <Art width="9" height="9" viewBox="0 0 9 9"><path d={scrollShapes[kind]} fill="#fff" /></Art>
  </ScrollButton>
);

const menus = ['File', 'Edit', 'Format', 'Insert', 'View', 'Tools', 'Help'];
const chapters = ['Childhood', 'Marriage', 'Tragedies', 'Bankruptcy', 'Later years'];

export default function App() {
  return (
    <>
      <GlobalStyle />
      <Desktop>
        <WindowFrame>
          <TitleBar>
            <Icon name="app" size={16} />
            <TitleText>Atlantis Word Processor - [eBook.rtf]</TitleText>
            <CaptionButtons>
              <CaptionButton aria-label="Minimize">
                <Art width="10" height="10"><path d="M0 5.500h10" stroke="#111" /></Art>
              </CaptionButton>
              <CaptionButton aria-label="Maximize">
                <Art width="10" height="10"><rect x=".5" y=".5" width="9" height="9" rx="1" fill="none" stroke="#111" /></Art>
              </CaptionButton>
              <CaptionButton aria-label="Close">
                <Art width="10" height="10"><path d="M0 0l10 10M10 0L0 10" stroke="#111" /></Art>
              </CaptionButton>
            </CaptionButtons>
          </TitleBar>
          <MenuBar>
            <Icon name="appDoc" size={14} />
            <Menus>{menus.map((m) => <MenuButton key={m}>{m}</MenuButton>)}</Menus>
            <ChildButtons>
              <ChildButton aria-label="Minimize document">
                <Art width="9" height="9"><path d="M2 7.500h5" stroke="#76879a" strokeWidth="2" /></Art>
              </ChildButton>
              <ChildButton aria-label="Restore document">
                <Art width="9" height="9"><path d="M2.500 3V.5h6v5H6M.5 3.500h5v5h-5zM3 1h6M1 4h5" fill="none" stroke="#76879a" /></Art>
              </ChildButton>
              <ChildButton aria-label="Close document">
                <Art width="9" height="9"><path d="M1.500 1.500l6 6M7.500 1.500l-6 6" stroke="#76879a" strokeWidth="2" /></Art>
              </ChildButton>
            </ChildButtons>
          </MenuBar>

          <Toolbar>
            <ToolGroup $wide>
              <Tools items="new+ open+ save" />
              <Tools items="star+ saveAs+ mail+" />
              <Tools items="template docSetup preview print" />
            </ToolGroup>
            <ToolGroup>
              <Tools items="undo redo find" />
              <Tools items="cut copy paste+" />
              <Tools items="eraser linesList+ sorted" />
            </ToolGroup>
            <ToolGroup>
              <ComboRow>
                <Combo label="Font" value="Tahoma" width={93} />
                <Combo label="Font size" value="10" width={42} />
              </ComboRow>
              <ToolRow>
                <Slot aria-label="Bold"><Letter $kind="b">B</Letter></Slot>
                <Slot aria-label="Italic"><Letter $kind="i">I</Letter></Slot>
                <Slot aria-label="Underline"><Letter $kind="u">U</Letter></Slot>
                <Caret label="Underline" />
                <Slot aria-label="Strikethrough"><Letter $kind="s">ABC</Letter></Slot>
              </ToolRow>
              <Tools items="highlight+ fontColor+ brush+" />
            </ToolGroup>
            <ToolGroup>
              <ComboRow><Combo label="Style" value="Normal" width={128} /></ComboRow>
              <Tools items="left* center right justify" />
              <Tools items="bullets+ numbers+ levels+" />
            </ToolGroup>
            <ToolGroup>
              <Tools items="omega+ calendar+ clock+" />
              <Tools items="docs+ picture+ columns+" />
              <ToolRow>
                <Slot aria-label="Footnote"><Letter $kind="n">AB<sup>1</sup></Letter></Slot>
                <Tools items="link footnote table+" />
              </ToolRow>
            </ToolGroup>
            <ToolGroup>
              <Tools items="pilcrow screen" />
              <Tools items="compass* headers" />
              <Tools items="rulerTop rulerSide" />
            </ToolGroup>
            <ToolGroup>
              <Tools items="spell lookup+" />
              <Tools items="hyphen bolt+" />
              <Tools items="keyboard comment" />
            </ToolGroup>
            <HelpGroup>
              <Tools items="help+" />
              <Tools items="home+" />
              <Tools items="gears+" />
            </HelpGroup>
          </Toolbar>

          <Body>
            <Board>
              <BoardHeader>
                <BoardTitle>Control Board</BoardTitle>
                <button aria-label="Board settings">
                  <Art width="12" height="12" viewBox="0 0 12 12">
                    <circle cx="6" cy="6" r="3.200" fill="none" stroke="#7fa5bd" strokeWidth="2.500" />
                    <circle cx="6" cy="6" r="5" fill="none" stroke="#7fa5bd" strokeWidth="2" strokeDasharray="2 1.930" />
                  </Art>
                </button>
                <button aria-label="Board help">
                  <Art width="12" height="12" viewBox="0 0 12 12">
                    <text x="6" y="11" textAnchor="middle" fontFamily="Noto Sans" fontWeight="bold" fontSize="14" fill="#8db0c8">?</text>
                  </Art>
                </button>
                <button aria-label="Close board">
                  <Art width="12" height="12" viewBox="0 0 12 12">
                    <rect width="12" height="12" rx="1" fill="#eaa997" />
                    <path d="M2.500 2.500l7 7M9.500 2.500l-7 7" stroke="#343434" strokeWidth="3" />
                  </Art>
                </button>
              </BoardHeader>
              <BoardTools>
                <BoardRow $indent={15}><Tools items="headings* bookmarks fields sections styles lists" /></BoardRow>
                <BoardRow $indent={31}><Tools items="zoomText format find palette clips" /></BoardRow>
              </BoardTools>
              <Outline>
                {chapters.map((name, i) => <li key={name}><OutlineItem $on={i === 0}>{name}</OutlineItem></li>)}
              </Outline>
              <BoardFooter><Tools items="back forward removeOne removeAll demote level levelOpen" /></BoardFooter>
            </Board>

            <Workspace>
              <Viewport>
                <Sheet>
                  <ContentsTitle>Table Of Contents</ContentsTitle>
                  <Contents>{chapters.map((name) => <ContentsItem key={name}>{name}</ContentsItem>)}</Contents>
                  <Note>
                    (when you have finished composing the chapters of your book, right-click the above table of contents,<br />
                    and choose "Table Of Contents | <Marked>Update Entire Table" from the menu;</Marked><br />
                    <Marked>or, if you do not want to include your own table of</Marked> contents within the body text of the e-book, right-click<br />
                    the above table of contents, and choose "Table Of Contents | Delete" from the menu)
                  </Note>
                  <Chapter>Childhood</Chapter>
                  <Note>
                    (replace the above text with the heading of the first chapter of your book;<br />
                    chapter headings must be formatted with the "Heading 1" style;<br />
                    each chapter heading will appear as a separate item within the inline table of contents (see <CrossLink href="#above">above</CrossLink>) and<br />
                    within the navigational table of contents of an e-book reader if it displays such a navigational table;<br />
                    adjust the headings of other chapters accordingly)
                  </Note>
                  <Paragraph>
                    Rembrandt Harmensz van Rijn was born in Leiden, Netherlands, on July 15, 1606, next to the<br />
                    last of the nine or more children of a miller, Harmen Gerritsz van Rijn, and a baker's daughter,<br />
                    Cornelia Neeltgen Willemsdr. Van Zuytbroeck. For seven years Rembrandt was a student at the<br />
                    Latin school, and then, in 1620, he enrolled at Leiden University at the age of thirteen. After<br />
                    only a few months, however, he left to pursue his true passion — painting. He was an<br />
                    apprentice (a person working to learn a skill) for three years to the painter Jacob Isaacsz van<br />
                    Swanenburgh, who had studied in Italy.
                  </Paragraph>
                </Sheet>
                <ScrollBar>
                  <Scroll kind="up" />
                  <Track $grow={235} />
                  <Thumb />
                  <Track $grow={160} />
                  <Scroll kind="down" />
                  <Scroll kind="top" />
                  <Scroll kind="item" />
                  <Scroll kind="bottom" />
                </ScrollBar>
              </Viewport>

              <StatusBar>
                <StatusCell $w={106}><span>Page 3/4</span><span>Sec 1/1</span></StatusCell>
                <StatusCell $w={130}><span>At 3.29"</span><span>Line 9</span><span>Col 52</span></StatusCell>
                <StatusCell $w={47} />
                <StatusCell $w={28}>Ins</StatusCell>
                <StatusCell $w={62} />
                <StatusCell $w={131}>English (United States)</StatusCell>
                <ViewTools>
                  <ViewButton aria-label="Draft view">
                    <Art width="12" height="11"><path d="M0 .5h12M0 3h12M0 5.500h12M0 8h12M0 10.500h12" stroke="#fff" /></Art>
                  </ViewButton>
                  <ViewButton aria-label="Web view">
                    <Art width="16" height="11"><path d="M0 .5h16M0 3h16M0 5.500h16M0 8h16M0 10.500h16" stroke="#fff" /></Art>
                  </ViewButton>
                  <ViewButton $on aria-label="Print view">
                    <Art width="14" height="16">
                      <path d="M0 0h14v16H0z" fill="#fff" />
                      <path d="M2 2.500h10M2 5h10M2 7.500h10M2 10h10M2 12.500h10" stroke="#0000c8" />
                    </Art>
                  </ViewButton>
                  <ZoomStep aria-label="Zoom out">
                    <Art width="10" height="10"><path d="M0 5h10" stroke={c.lilac} strokeWidth="2" /></Art>
                  </ZoomStep>
                  <ZoomSlider type="range" aria-label="Zoom" min="0" max="200" defaultValue="99" />
                  <ZoomStep aria-label="Zoom in">
                    <Art width="10" height="10"><path d="M0 5h10M5 0v10" stroke={c.lilac} strokeWidth="2" /></Art>
                  </ZoomStep>
                  <ZoomValue>100%</ZoomValue>
                  <ThemeButton aria-label="Contrast">
                    <Art width="16" height="16" viewBox="0 0 16 16">
                      <circle cx="8" cy="8" r="7" fill="#fff" stroke="#000" strokeWidth="1.500" />
                      <path d="M8 1.500a6.500 6.500 0 0 1 0 13z" fill="#808080" />
                    </Art>
                  </ThemeButton>
                </ViewTools>
              </StatusBar>
            </Workspace>
          </Body>
        </WindowFrame>
      </Desktop>
    </>
  );
}
